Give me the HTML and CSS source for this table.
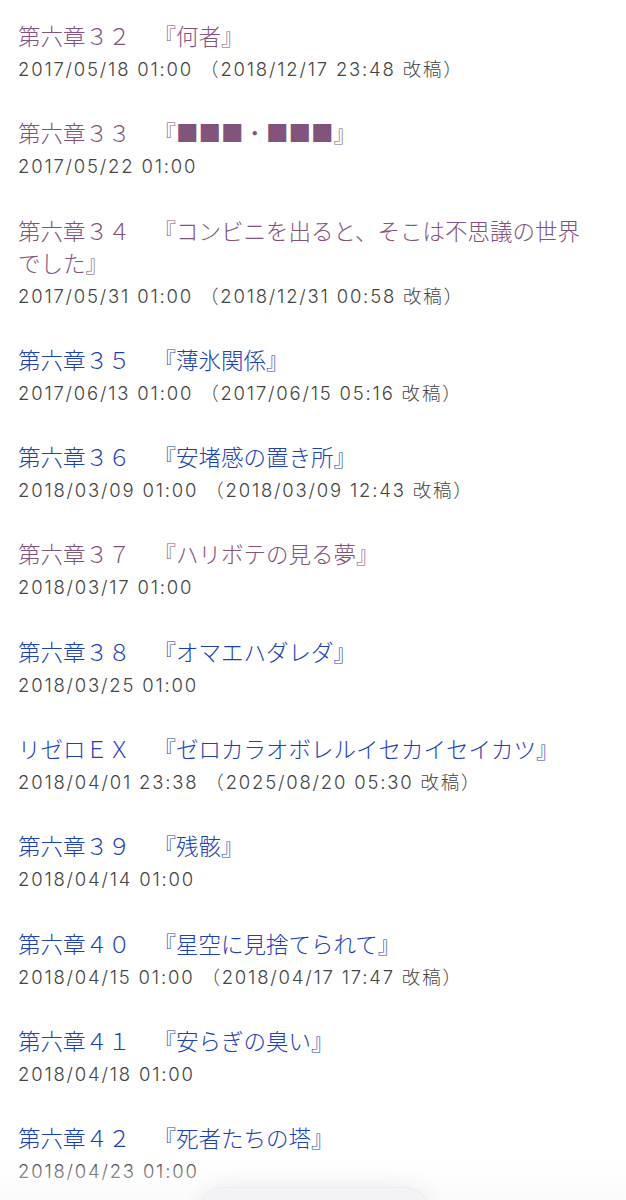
FILE: index.html
```html
<!DOCTYPE html>
<html lang="ja">
<head>
    <meta charset="UTF-8">
    <meta name="viewport" content="width=device-width, initial-scale=1.0">
    <title>目次</title>
    <link rel="stylesheet" href="styles.css">
</head>
<body>
    <div class="index-list">
        <div class="sublist">
            <a class="subtitle visited" href="#"><span class="num">第六章３２</span>『何者』</a>
            <div class="update">2017/05/18 01:00 <span class="revised">（2018/12/17 23:48 改稿）</span></div>
        </div>
        <div class="sublist">
            <a class="subtitle visited" href="#"><span class="num">第六章３３</span>『■■■・■■■』</a>
            <div class="update">2017/05/22 01:00</div>
        </div>
        <div class="sublist">
            <a class="subtitle visited" href="#"><span class="num">第六章３４</span>『コンビニを出ると、そこは不思議の世界でした』</a>
            <div class="update">2017/05/31 01:00 <span class="revised">（2018/12/31 00:58 改稿）</span></div>
        </div>
        <div class="sublist">
            <a class="subtitle" href="#"><span class="num">第六章３５</span>『薄氷関係』</a>
            <div class="update">2017/06/13 01:00 <span class="revised">（2017/06/15 05:16 改稿）</span></div>
        </div>
        <div class="sublist">
            <a class="subtitle" href="#"><span class="num">第六章３６</span>『安堵感の置き所』</a>
            <div class="update">2018/03/09 01:00 <span class="revised">（2018/03/09 12:43 改稿）</span></div>
        </div>
        <div class="sublist">
            <a class="subtitle visited" href="#"><span class="num">第六章３７</span>『ハリボテの見る夢』</a>
            <div class="update">2018/03/17 01:00</div>
        </div>
        <div class="sublist">
            <a class="subtitle" href="#"><span class="num">第六章３８</span>『オマエハダレダ』</a>
            <div class="update">2018/03/25 01:00</div>
        </div>
        <div class="sublist">
            <a class="subtitle" href="#"><span class="num">リゼロＥＸ</span>『ゼロカラオボレルイセカイセイカツ』</a>
            <div class="update">2018/04/01 23:38 <span class="revised">（2025/08/20 05:30 改稿）</span></div>
        </div>
        <div class="sublist">
            <a class="subtitle" href="#"><span class="num">第六章３９</span>『残骸』</a>
            <div class="update">2018/04/14 01:00</div>
        </div>
        <div class="sublist">
            <a class="subtitle" href="#"><span class="num">第六章４０</span>『星空に見捨てられて』</a>
            <div class="update">2018/04/15 01:00 <span class="revised">（2018/04/17 17:47 改稿）</span></div>
        </div>
        <div class="sublist">
            <a class="subtitle" href="#"><span class="num">第六章４１</span>『安らぎの臭い』</a>
            <div class="update">2018/04/18 01:00</div>
        </div>
        <div class="sublist">
            <a class="subtitle" href="#"><span class="num">第六章４２</span>『死者たちの塔』</a>
            <div class="update">2018/04/23 01:00</div>
        </div>
    </div>

    <div class="toolbar-fade"></div>
    <div class="toolbar-pill"></div>
</body>
</html>
```

FILE: styles.css
```css
:root {
    --link: #1c41b4;
    --visited: #82547d;
    --date: #444444;
}

* {
    margin: 0;
    padding: 0;
    box-sizing: border-box;
}

body {
    background-color: #ffffff;
    font-family: "Noto Sans CJK JP", sans-serif;
    overflow: hidden;
}

.index-list {
    padding: 19px 26px 0 18px;
}

.sublist {
    margin-bottom: 31.3px;
}

.subtitle {
    display: block;
    font-size: 22.5px;
    line-height: 32px;
    font-weight: 300;
    color: var(--link);
    text-decoration: none;
}

.subtitle.visited {
    color: var(--visited);
}

.num {
    margin-right: 23px;
}

.update {
    margin-top: 3px;
    font-family: "Inter", "Noto Sans CJK JP", sans-serif;
    font-weight: 300;
    font-size: 18.5px;
    line-height: 31px;
    letter-spacing: 1.8px;
    color: var(--date);
}

.toolbar-fade {
    position: fixed;
    left: 0;
    right: 0;
    bottom: 0;
    height: 40px;
    background: linear-gradient(to bottom, rgba(255,255,255,0), rgba(250,250,251,0.9));
}

.toolbar-pill {
    position: fixed;
    left: 200px;
    width: 228px;
    top: 1187px;
    height: 44px;
    border-radius: 22px;
    background-color: #f3f3f5;
    border: 1px solid #ececef;
    box-shadow: 0 0 24px rgba(0,0,0,0.07);
}
```
